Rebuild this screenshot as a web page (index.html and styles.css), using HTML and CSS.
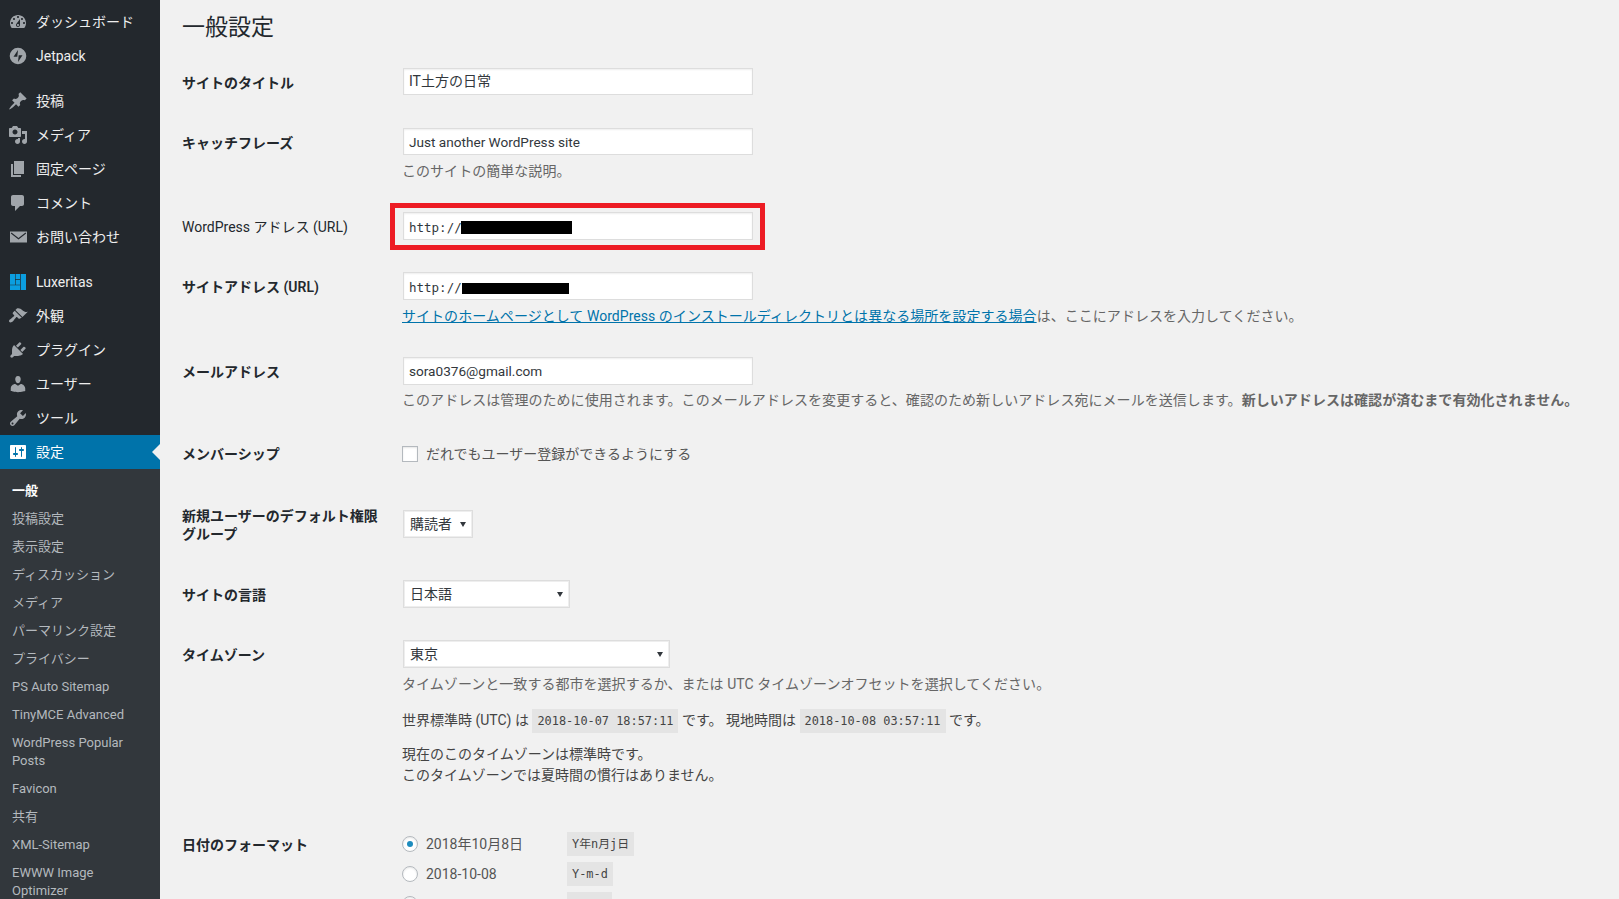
FILE: index.html
```html
<!DOCTYPE html>
<html lang="ja">
<head>
<meta charset="utf-8">
<title>一般設定</title>
<link rel="stylesheet" href="styles.css">
</head>
<body>
<div class="app">
<nav class="sidebar">
  <ul class="menu">
    <li class="item"><svg class="ico" viewBox="0 0 20 20"><path d="M3.76 16h12.48c1.1-1.37 1.76-3.11 1.76-5 0-4.42-3.58-8-8-8s-8 3.58-8 8c0 1.89.66 3.63 1.76 5zM10 4c.55 0 1 .45 1 1s-.45 1-1 1-1-.45-1-1 .45-1 1-1zM6 6c.55 0 1 .45 1 1s-.45 1-1 1-1-.45-1-1 .45-1 1-1zm8 0c.55 0 1 .45 1 1s-.45 1-1 1-1-.45-1-1 .45-1 1-1zm-5.37 5.55L12 7v6c0 1.1-.9 2-2 2s-2-.9-2-2c0-.57.24-1.08.63-1.45zM4 10c.55 0 1 .45 1 1s-.45 1-1 1-1-.45-1-1 .45-1 1-1zm12 0c.55 0 1 .45 1 1s-.45 1-1 1-1-.45-1-1 .45-1 1-1zm-5 3c0-.55-.45-1-1-1s-1 .45-1 1 .45 1 1 1 1-.45 1-1z" fill-rule="evenodd"/></svg><span>ダッシュボード</span></li>
    <li class="item"><svg class="ico" viewBox="0 0 20 20"><path d="M10 1.7a8.3 8.3 0 1 0 0 16.6 8.3 8.3 0 0 0 0-16.6zM10 4l-.7 6.8H5.5zM10.7 9.2h3.8L10 16z" fill-rule="evenodd"/></svg><span>Jetpack</span></li>
    <li class="sep"></li>
    <li class="item"><svg class="ico" viewBox="0 0 20 20"><path d="M10.44 3.02l1.82-1.82 6.36 6.35-1.83 1.82c-1.05-.68-2.48-.57-3.41.36l-.75.75c-.92.93-1.04 2.35-.35 3.41l-1.83 1.82-2.41-2.41-2.8 2.79c-.42.42-3.38 2.71-3.8 2.29s1.86-3.39 2.28-3.81l2.79-2.79L4.1 9.36l1.83-1.82c1.05.69 2.48.57 3.4-.36l.75-.75c.93-.92 1.05-2.35.36-3.41z"/></svg><span>投稿</span></li>
    <li class="item"><svg class="ico" viewBox="0 0 20 20"><path d="M13 11V4c0-.55-.45-1-1-1h-1.67L9 1H5L3.67 3H2c-.55 0-1 .45-1 1v7c0 .55.45 1 1 1h10c.55 0 1-.45 1-1zM7 4.5c1.38 0 2.5 1.12 2.5 2.5S8.38 9.5 7 9.5 4.5 8.38 4.5 7 5.62 4.5 7 4.5zM14 6h5v10.5c0 1.38-1.12 2.5-2.5 2.5S14 17.88 14 16.5s1.12-2.5 2.5-2.5c.17 0 .34.02.5.05V9h-3V6zm-4 8.05V13h2v3.5c0 1.38-1.12 2.5-2.5 2.5S7 17.88 7 16.5 8.12 14 9.5 14c.17 0 .34.02.5.05z"/></svg><span>メディア</span></li>
    <li class="item"><svg class="ico" viewBox="0 0 20 20"><path d="M6 15V2h10v13H6zm-1 1h8v2H3V5h2v11z"/></svg><span>固定ページ</span></li>
    <li class="item"><svg class="ico" viewBox="0 0 20 20"><path d="M5 2h9c1.1 0 2 .9 2 2v7c0 1.1-.9 2-2 2h-2l-5 5v-5H5c-1.1 0-2-.9-2-2V4c0-1.1.9-2 2-2z"/></svg><span>コメント</span></li>
    <li class="item"><svg class="ico" viewBox="0 0 20 20"><path d="M2 4.5h17v11H2zM3.5 5.6l-.7.9 7.7 6 7.7-6-.7-.9-7 5.3z" fill-rule="evenodd"/></svg><span>お問い合わせ</span></li>
    <li class="sep"></li>
    <li class="item"><svg class="ico lux" viewBox="0 0 20 20"><path d="M2 2h5v10.7H2zM7.6 2H12v5.2H7.6zM7.6 7.9H12v4.8H7.6zM2 13.3h10V18H2zM12.7 2H18v16h-5.3z"/></svg><span>Luxeritas</span></li>
    <li class="item"><svg class="ico" viewBox="0 0 20 20"><path d="M14.48 11.06L7.41 3.99l1.5-1.5c.5-.56 2.3-.47 3.51.32 1.21.8 1.43 1.28 2.91 2.1 1.18.64 2.45 1.26 4.45.85zm-.71.71L6.7 4.7 4.93 6.47c-.39.39-.39 1.02 0 1.41l1.06 1.06c.39.39.39 1.03 0 1.42-.6.6-1.43 1.11-2.21 1.69-.35.26-.7.53-1.01.84C1.43 13.23.4 14.98 1.4 16c.99 1 2.76-.04 4.09-1.36.31-.31.58-.66.85-1.02.57-.78 1.08-1.61 1.69-2.21.39-.39 1.02-.39 1.41 0l1.06 1.06c.39.39 1.02.39 1.41 0z"/></svg><span>外観</span></li>
    <li class="item"><svg class="ico" viewBox="0 0 20 20"><path d="M13.11 4.36L9.87 7.6 8 5.73l3.24-3.24c.35-.34 1.05-.2 1.56.32.52.51.66 1.21.31 1.55zm-8 1.77l.91-1.12 9.01 9.01-1.19.84c-.71.71-2.63 1.16-3.82 1.16H6.14L4.9 17.26c-.59.59-1.54.59-2.12 0-.59-.58-.59-1.53 0-2.12l1.24-1.24v-3.88c0-1.13.4-3.19 1.09-3.89zm7.26 3.97l3.24-3.24c.34-.35 1.04-.21 1.55.31.52.51.66 1.21.31 1.55l-3.24 3.25z"/></svg><span>プラグイン</span></li>
    <li class="item"><svg class="ico" viewBox="0 0 20 20"><path d="M10 9.25c-2.27 0-2.73-3.44-2.73-3.44C7 4.02 7.82 2 9.97 2c2.16 0 2.98 2.02 2.71 3.81 0 0-.41 3.44-2.68 3.44zm0 2.57L12.72 10c2.39 0 4.52 2.33 4.52 4.53v2.49s-3.65 1.13-7.24 1.13c-3.65 0-7.24-1.13-7.24-1.13v-2.49c0-2.25 1.94-4.48 4.47-4.48z"/></svg><span>ユーザー</span></li>
    <li class="item"><svg class="ico" viewBox="0 0 20 20"><path d="M16.68 9.77c-1.34 1.34-3.3 1.67-4.95.99l-5.41 6.52c-.99.99-2.59.99-3.58 0s-.99-2.59 0-3.57l6.52-5.42c-.68-1.65-.35-3.61.99-4.95 1.28-1.28 3.12-1.62 4.72-1.06l-2.89 2.89 2.82 2.82 2.86-2.87c.53 1.58.18 3.39-1.08 4.65zM3.81 16.21c.4.39 1.04.39 1.43 0 .4-.4.4-1.04 0-1.43-.39-.4-1.03-.4-1.43 0-.39.39-.39 1.03 0 1.43z" fill-rule="evenodd"/></svg><span>ツール</span></li>
    <li class="item current"><svg class="ico" viewBox="0 0 20 20"><path d="M18 16V4c0-.55-.45-1-1-1H3c-.55 0-1 .45-1 1v12c0 .55.45 1 1 1h14c.55 0 1-.45 1-1zM8 11h1c.55 0 1 .45 1 1s-.45 1-1 1H8v1.5c0 .28-.22.5-.5.5s-.5-.22-.5-.5V13H6c-.55 0-1-.45-1-1s.45-1 1-1h1V5.5c0-.28.22-.5.5-.5s.5.22.5.5V11zm5-2h-1c-.55 0-1-.45-1-1s.45-1 1-1h1V5.5c0-.28.22-.5.5-.5s.5.22.5.5V7h1c.55 0 1 .45 1 1s-.45 1-1 1h-1v5.5c0 .28-.22.5-.5.5s-.5-.22-.5-.5V9z"/></svg><span>設定</span></li>
  </ul>
  <ul class="submenu">
    <li class="sub-current">一般</li>
    <li>投稿設定</li>
    <li>表示設定</li>
    <li>ディスカッション</li>
    <li>メディア</li>
    <li>パーマリンク設定</li>
    <li>プライバシー</li>
    <li>PS Auto Sitemap</li>
    <li>TinyMCE Advanced</li>
    <li>WordPress Popular Posts</li>
    <li>Favicon</li>
    <li>共有</li>
    <li>XML-Sitemap</li>
    <li>EWWW Image Optimizer</li>
  </ul>
</nav>
<main class="content">
  <h1 class="title">一般設定</h1>
  <table class="form">
    <tr>
      <th>サイトのタイトル</th>
      <td><input class="field" type="text" value="IT土方の日常"></td>
    </tr>
    <tr>
      <th>キャッチフレーズ</th>
      <td><input class="field latin" type="text" value="Just another WordPress site">
        <p class="desc">このサイトの簡単な説明。</p></td>
    </tr>
    <tr>
      <th class="plain">WordPress アドレス (URL)</th>
      <td><span class="field-wrap"><input class="field mono" type="text" value="http://"><span class="redact r1"></span><span class="highlight"></span></span></td>
    </tr>
    <tr>
      <th>サイトアドレス (URL)</th>
      <td><span class="field-wrap"><input class="field mono" type="text" value="http://"><span class="redact r2"></span></span>
        <p class="desc"><a href="#">サイトのホームページとして WordPress のインストールディレクトリとは異なる場所を設定する場合</a>は、ここにアドレスを入力してください。</p></td>
    </tr>
    <tr>
      <th>メールアドレス</th>
      <td><input class="field latin mail" type="text" value="sora0376@gmail.com">
        <p class="desc wide">このアドレスは管理のために使用されます。このメールアドレスを変更すると、確認のため新しいアドレス宛にメールを送信します。<strong>新しいアドレスは確認が済むまで有効化されません。</strong></p></td>
    </tr>
    <tr class="member">
      <th>メンバーシップ</th>
      <td><label class="choice"><input class="check" type="checkbox">だれでもユーザー登録ができるようにする</label></td>
    </tr>
    <tr class="role">
      <th>新規ユーザーのデフォルト権限グループ</th>
      <td><span class="select-wrap s-role"><select class="sel"><option>購読者</option></select></span></td>
    </tr>
    <tr>
      <th>サイトの言語</th>
      <td><span class="select-wrap s-lang"><select class="sel"><option>日本語</option></select></span></td>
    </tr>
    <tr class="tz">
      <th>タイムゾーン</th>
      <td><span class="select-wrap s-tz"><select class="sel"><option>東京</option></select></span>
        <p class="desc">タイムゾーンと一致する都市を選択するか、または UTC タイムゾーンオフセットを選択してください。</p>
        <p class="note">世界標準時 (UTC) は <code>2018-10-07 18:57:11</code> です。 現地時間は <code>2018-10-08 03:57:11</code> です。</p>
        <p class="note note-next">現在のこのタイムゾーンは標準時です。<br>このタイムゾーンでは夏時間の慣行はありません。</p></td>
    </tr>
    <tr class="date">
      <th>日付のフォーマット</th>
      <td>
        <label class="date-row"><input class="radio" type="radio" name="d" checked><span class="date-text">2018年10月8日</span><code>Y年n月j日</code></label>
        <label class="date-row"><input class="radio" type="radio" name="d"><span class="date-text">2018-10-08</span><code>Y-m-d</code></label>
        <label class="date-row"><input class="radio" type="radio" name="d"><span class="date-text"></span><code class="blank"></code></label>
      </td>
    </tr>
  </table>
</main>
</div>
</body>
</html>
```
FILE: styles.css
```css
* { box-sizing: border-box; }
html, body { margin: 0; height: 899px; overflow: hidden; }
body {
  background: #f1f1f1;
  color: #444;
  font: 14px/1.4 Roboto, "Noto Sans CJK JP", sans-serif;
}
.app { display: flex; height: 899px; }
.sidebar {
  flex: 0 0 160px;
  background: #23282d;
  padding-top: 5px;
}
.menu, .submenu { list-style: none; margin: 0; padding: 0; }
.item {
  position: relative;
  display: flex;
  align-items: center;
  height: 34px;
  padding-left: 8px;
  color: #eee;
  font-size: 14px;
}
.item span { margin-top: 2px; }
.ico { width: 20px; height: 20px; margin-right: 8px; fill: #a0a5aa; flex: none; }
.lux { fill: #0b9ee0; }
.sep { height: 11px; }
.current { background: #0073aa; color: #fff; }
.current .ico { fill: #fff; }
.current::after {
  content: "";
  position: absolute;
  right: 0;
  top: 9px;
  border: 8px solid transparent;
  border-right-color: #f1f1f1;
  border-left-width: 0;
}
.submenu {
  background: #32373c;
  padding: 8px 0 7px;
  font-size: 13px;
  line-height: 18px;
  color: #b4b9be;
}
.submenu li { padding: 5px 30px 5px 12px; }
.sub-current { color: #fff; font-weight: 700; }
.content { flex: 1; padding: 0 20px 0 22px; min-width: 0; }
.title {
  margin: 0;
  padding: 11px 0 8px;
  font-size: 23px;
  line-height: 33px;
  font-weight: 400;
  color: #23282d;
}
.form { border-collapse: collapse; }
.form th {
  width: 210px;
  padding: 22px 10px 18px 0;
  text-align: left;
  vertical-align: top;
  color: #23282d;
  font-weight: 600;
  line-height: 18px;
}
.form th.plain { font-weight: 400; }
.form td { padding: 15px 10px; vertical-align: top; line-height: 18px; }
.field {
  display: block;
  width: 350px;
  height: 27px;
  margin: 1px 1px 2px;
  padding: 0 5px 3px;
  border: 1px solid #ddd;
  background: #fff;
  color: #32373c;
  font: 14px/20px Roboto, "Noto Sans CJK JP", sans-serif;
  box-shadow: inset 0 1px 2px rgba(0,0,0,.07);
  outline: 0;
}
.latin { font-size: 13.6px; padding: 2px 5px 1px; }
.mono {
  height: 28px;
  margin: 1px;
  padding: 4px 5px 2px;
  font: 12.5px/20px "DejaVu Sans Mono", monospace;
}
.mail { height: 28px; margin: 1px; padding: 1px 5px 2px; }
.field-wrap { position: relative; display: block; width: 352px; }
.redact { position: absolute; background: #000; }
.r1 { left: 59px; top: 9px; width: 111px; height: 13px; }
.r2 { left: 60px; top: 11px; width: 107px; height: 11px; }
.highlight {
  position: absolute;
  left: -12px;
  top: -9px;
  width: 375px;
  height: 47px;
  border: 5px solid #ed1c24;
}
.desc { margin: 5px 0 -1px; color: #666; font-size: 14px; line-height: 22px; white-space: nowrap; letter-spacing: .04px; }
.desc a { color: #0073aa; }
.wide { letter-spacing: .05px; margin-top: 4px; }
.note { margin: 15px 0 0; color: #444; line-height: 21px; white-space: nowrap; }
.note-next { margin-top: 11px; }
.member th { padding-top: 20px; padding-bottom: 0; }
.member td { padding: 17px 10px 21px; }
.role th { padding: 20px 10px 21px 0; }
.tz td { padding-bottom: 28px; }
.choice { display: flex; align-items: center; gap: 8px; color: #555; height: 24px; }
.check {
  appearance: none;
  width: 16px;
  height: 16px;
  margin: 0;
  border: 1px solid #b4b9be;
  background: #fff;
  box-shadow: inset 0 1px 2px rgba(0,0,0,.1);
}
.select-wrap {
  position: relative;
  display: block;
  height: 28px;
  margin: 1px;
}
.select-wrap::after {
  content: "";
  position: absolute;
  top: 12px;
  right: 7px;
  border: 3px solid transparent;
  border-top: 5px solid #32373c;
  border-bottom: 0;
  pointer-events: none;
}
.s-role { width: 70px; margin-top: 8px; }
.s-lang { width: 167px; }
.s-tz { width: 267px; }
.sel {
  appearance: none;
  display: block;
  width: 100%;
  height: 28px;
  padding: 2px 6px;
  border: 1px solid #ddd;
  border-radius: 0;
  background: #fff;
  color: #32373c;
  font: 14px/22px Roboto, "Noto Sans CJK JP", sans-serif;
  box-shadow: 0 0 0 1px #eee inset;
  outline: 0;
}
code {
  display: inline-block;
  padding: 3px 5px 2px;
  background: #e4e4e4;
  color: #444;
  font: 11.9px/19px "DejaVu Sans Mono", "Noto Sans CJK JP", monospace;
}
.blank { width: 45px; height: 24px; }
.date-row { display: flex; align-items: center; height: 30px; color: #555; }
.radio {
  appearance: none;
  width: 16px;
  height: 16px;
  margin: 0 8px 0 0;
  border: 1px solid #b4b9be;
  border-radius: 50%;
  background: #fff;
  display: flex;
  align-items: center;
  justify-content: center;
  box-shadow: inset 0 1px 2px rgba(0,0,0,.1);
}
.radio:checked::before {
  content: "";
  width: 6px;
  height: 6px;
  border-radius: 50%;
  background: #1e8cbe;
}
.date-text { width: 141px; }
```
